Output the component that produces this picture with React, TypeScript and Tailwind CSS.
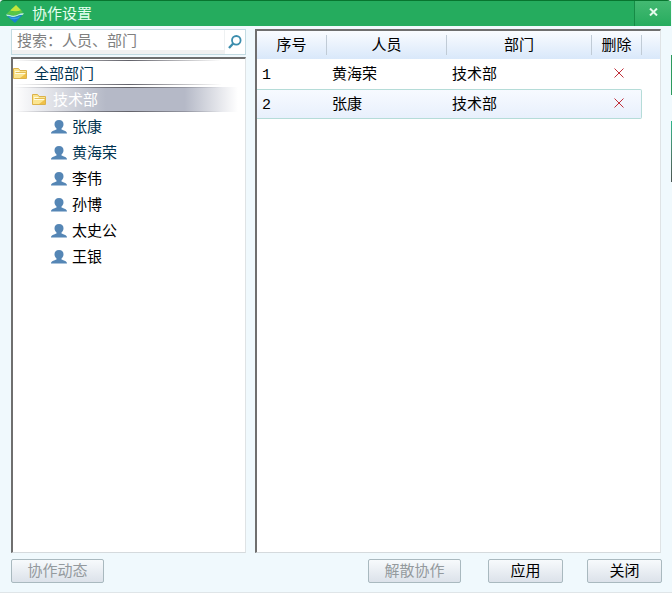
import { useState } from "react";
import clsx from "clsx";

const members = [
  { name: "张康", joined: true },
  { name: "黄海荣", joined: true },
  { name: "李伟", joined: false },
  { name: "孙博", joined: false },
  { name: "太史公", joined: false },
  { name: "王银", joined: false },
];

const initialRows = [
  { id: 1, name: "黄海荣", dept: "技术部" },
  { id: 2, name: "张康", dept: "技术部" },
];

function Logo() {
  return (
    <svg className="h-[18px] w-[18px]" viewBox="0 0 18 18" aria-hidden="true">
      <path d="M10 0 15.5 5.5C12 5.5 11 8 4 5.5Z" fill="#c2e63c" />
      <path d="M4 5.5C10 8 12 5.8 15.5 5.5L17 7.5C13 7.5 11 11 7 10.5C4 10 3 9 0.5 9Z" fill="#58c647" />
      <path d="M0 9.5C3 9 5 11.2 9 10.5C12 10 14 7.5 18 8.5L16.5 10C13 9.5 11 12 7 12C4 12 3 11 1 11Z" fill="#bdeedd" />
      <path d="M1 11C4 11 5 12.5 8.5 12C12 11.5 13 9.8 16.5 10L9 18Z" fill="#1a7fd0" />
      <path d="M3 12C7 13.5 11 13 14.5 11L12.5 13.2C9 14.5 7 14.5 4.5 13.6Z" fill="#3da5e2" />
    </svg>
  );
}

function FolderIcon() {
  return (
    <svg className="h-[13px] w-[15px] shrink-0" viewBox="0 0 15 13" aria-hidden="true">
      <path d="M0.5 11.5V1.5H5.5L7 3.5H13.5V11.5Z" fill="#fbe590" stroke="#dcb24a" />
      <path d="M2 4.5H6.5M2 6.5H12" stroke="#fffbe2" />
      <path d="M7 11 13 6.5V11Z" fill="#efc048" />
      <path d="M3 5.5H13.5" stroke="#e3bd55" />
    </svg>
  );
}

function PersonIcon() {
  return (
    <svg className="h-[14px] w-[16px] shrink-0" viewBox="0 0 16 14" aria-hidden="true">
      <path
        d="M8 0C11 0 12.5 1.8 12.5 4.2C12.5 6.2 11.5 7.6 10.5 8.4V9.6C12.5 10.6 16 11 16 13.5H0C0 11 3.5 10.6 5.5 9.6V8.4C4.5 7.6 3.5 6.2 3.5 4.2C3.5 1.8 5 0 8 0Z"
        fill="#5586b5"
      />
    </svg>
  );
}

function SearchIcon() {
  return (
    <svg className="h-[14px] w-[14px]" viewBox="0 0 14 14" fill="none" aria-hidden="true">
      <circle cx="8.3" cy="5.3" r="4.3" stroke="#3b8dad" strokeWidth="1.8" />
      <path d="M5.2 8.5 1 13" stroke="#3b8dad" strokeWidth="2.4" />
    </svg>
  );
}

function FadingLine() {
  return <span className="h-px shrink-0 bg-linear-to-r from-transparent via-[#62626a] via-50% to-transparent to-90%" />;
}

const panelClass =
  "border-t-2 border-r border-b border-l-2 border-t-[#6f6f6f] border-r-[#dfe3e5] border-b-[#d5dadd] border-l-[#6f6f6f] bg-white";

const buttonClass =
  "h-6 rounded-xs border border-[#a9b9bf] bg-linear-to-b from-[#f7fafc] to-[#dce2ea] text-[15px] leading-5 text-black disabled:text-[#949a9e]";

export default function App() {
  const [rows, setRows] = useState(initialRows);
  const [keyword, setKeyword] = useState("");

  return (
    <main className="relative flex min-h-screen flex-col border-b border-[#dfe5e8] bg-[#f0f9fd] font-['Liberation_Sans','Noto_Sans_CJK_SC',sans-serif] text-[15px] leading-5 text-black">
      <header className="mr-px flex h-[26px] items-center rounded-t-sm border-t border-[#08752f] bg-[#25ac5e] pl-1.5">
        <Logo />
        <h1 className="ml-2 flex-1 text-[15px] font-normal text-[#e6fff0]">协作设置</h1>
        <button
          type="button"
          aria-label="关闭窗口"
          className="flex h-full w-[37px] items-center justify-center border-l border-[#168b46] bg-linear-to-b from-[#43b972] to-[#25ac5e] pb-1"
        >
          <svg className="h-2 w-[9px]" viewBox="0 0 9 8" aria-hidden="true">
            <path d="M1 0.5 8 7.5M8 0.5 1 7.5" stroke="#e4fbed" strokeWidth="2" />
          </svg>
        </button>
      </header>

      <div className="flex flex-1 gap-[9px] px-[11px] pt-[3px]">
        <aside className="flex w-[235px] shrink-0 flex-col gap-0.5">
          <form
            className="flex h-[26px] items-center border border-[#c3dbe2] bg-white"
            onSubmit={(e) => e.preventDefault()}
          >
            <input
              type="text"
              aria-label="搜索"
              placeholder="搜索：人员、部门"
              value={keyword}
              onChange={(e) => setKeyword(e.target.value)}
              className="h-full min-w-0 flex-1 border-r border-b-4 border-r-[#eef1f2] border-b-[#f1f1f1] pl-[5px] outline-none placeholder:text-[#808080]"
            />
            <button type="submit" aria-label="搜索" className="flex h-full w-5 items-center justify-center">
              <SearchIcon />
            </button>
          </form>

          <ul className={clsx("flex-1 pt-px", panelClass)}>
            <li>
              <button type="button" className="flex h-[25px] w-full flex-col text-left text-[#003350]">
                <FadingLine />
                <span className="flex w-full flex-1 items-center gap-1.5 pt-0.5">
                  <FolderIcon />
                  全部部门
                </span>
                <FadingLine />
              </button>
              <ul className="pt-0.5">
                <li>
                  <button
                    type="button"
                    className="flex h-[25px] w-full flex-col bg-[linear-gradient(to_right,#fff,#b5b9c7_40%,#b5b9c7_74%,#fff_97%)] text-left text-white"
                  >
                    <FadingLine />
                    <span className="flex w-full flex-1 items-center gap-1.5 pl-[19px]">
                      <FolderIcon />
                      技术部
                    </span>
                    <FadingLine />
                  </button>
                  <ul className="pt-0.5">
                    {members.map((m) => (
                      <li key={m.name}>
                        <button
                          type="button"
                          className={clsx(
                            "flex h-[26px] w-full items-center gap-[5px] pl-[38px] text-left",
                            m.joined && "text-[#003350]",
                          )}
                        >
                          <PersonIcon />
                          {m.name}
                        </button>
                      </li>
                    ))}
                  </ul>
                </li>
              </ul>
            </li>
          </ul>
        </aside>

        <section className={clsx("min-w-0 flex-1", panelClass)}>
          <div className="bg-linear-to-b from-[#fafcff] to-[#d9e8fa] bg-size-[100%_28px] bg-no-repeat pr-[18px]">
            <table className="w-full table-fixed border-separate border-spacing-0">
              <colgroup>
                <col className="w-[70px]" />
                <col className="w-[120px]" />
                <col />
                <col className="w-[50px]" />
              </colgroup>
              <thead>
                <tr className="h-7">
                  {["序号", "人员", "部门", "删除"].map((label) => (
                    <th key={label} scope="col" className="p-0 font-normal">
                      <div className="border-r border-[#c0cbd6]">{label}</div>
                    </th>
                  ))}
                </tr>
              </thead>
              <tbody>
                {rows.map((row, i) => {
                  const line = i === 1 && "border-y border-[#b5dcd8] bg-linear-to-b from-[#f7faff] to-[#e8f0fc]";
                  return (
                    <tr key={row.id} className="h-[30px]">
                      <td className={clsx("p-0 pt-1 pl-[5px] font-['Liberation_Mono',monospace]", line)}>{row.id}</td>
                      <td className={clsx("p-0 pl-[5px]", line)}>{row.name}</td>
                      <td className={clsx("p-0 pl-[5px]", line)}>{row.dept}</td>
                      <td className={clsx("p-0 pb-0.5", line, i === 1 && "rounded-r-xs border-r")}>
                        <button
                          type="button"
                          aria-label={`删除${row.name}`}
                          className="flex w-full items-center justify-center pl-1"
                          onClick={() => setRows(rows.filter((r) => r.id !== row.id))}
                        >
                          <svg className="h-2.5 w-2.5" viewBox="0 0 10 10" aria-hidden="true">
                            <path d="M0.5 0.5 9.5 9.5M9.5 0.5 0.5 9.5" stroke="#c02f3a" />
                          </svg>
                        </button>
                      </td>
                    </tr>
                  );
                })}
              </tbody>
            </table>
          </div>
        </section>
      </div>

      <footer className="flex items-center pt-1.5 pr-2.5 pb-[9px] pl-[11px]">
        <button type="button" disabled className={clsx(buttonClass, "mr-auto w-[93px]")}>
          协作动态
        </button>
        <button type="button" disabled className={clsx(buttonClass, "mr-[27px] w-[93px]")}>
          解散协作
        </button>
        <button type="button" className={clsx(buttonClass, "mr-6 w-[75px]")}>
          应用
        </button>
        <button type="button" className={clsx(buttonClass, "w-[75px]")}>
          关闭
        </button>
      </footer>

      {/* sliver of the window behind */}
      <div className="absolute top-[55px] right-0 h-10 w-px bg-[#2c9a5d]" />
      <div className="absolute top-[121px] right-0 h-[61px] w-px bg-linear-to-b from-[#2bb58a] to-[#4b5553]" />
    </main>
  );
}
